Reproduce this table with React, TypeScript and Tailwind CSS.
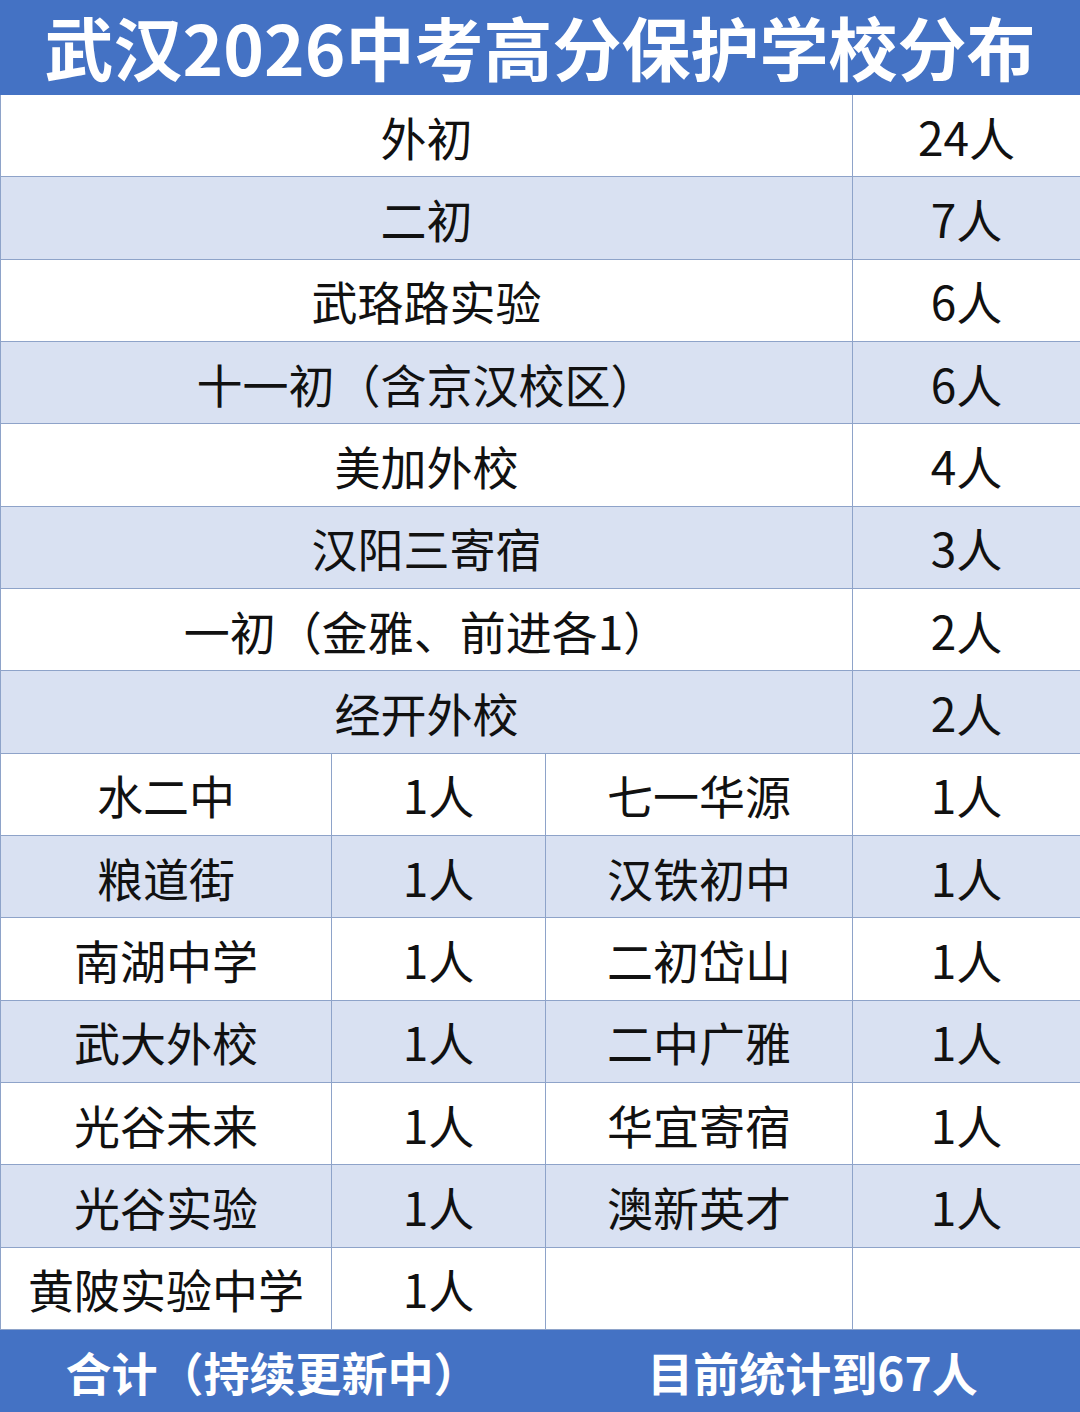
const fullRows: [string, string][] = [
  ['外初', '24人'],
  ['二初', '7人'],
  ['武珞路实验', '6人'],
  ['十一初（含京汉校区）', '6人'],
  ['美加外校', '4人'],
  ['汉阳三寄宿', '3人'],
  ['一初（金雅、前进各1）', '2人'],
  ['经开外校', '2人'],
]

const splitRows: [string, string, string, string][] = [
  ['水二中', '1人', '七一华源', '1人'],
  ['粮道街', '1人', '汉铁初中', '1人'],
  ['南湖中学', '1人', '二初岱山', '1人'],
  ['武大外校', '1人', '二中广雅', '1人'],
  ['光谷未来', '1人', '华宜寄宿', '1人'],
  ['光谷实验', '1人', '澳新英才', '1人'],
  ['黄陂实验中学', '1人', '', ''],
]

const cell = 'flex items-center justify-center border-r border-b border-[#8ea3c9] text-[46px] text-[#111] leading-none'

export default function App() {
  return (
    <div
      className="w-[1080px] h-[1412px] flex flex-col bg-white overflow-hidden"
      style={{ fontFamily: '"Noto Sans CJK SC", "Noto Sans", sans-serif' }}
    >
      <div className="h-[95px] bg-[#4472c4] flex items-center justify-center pb-[3px]">
        <h1 className="text-[69px] font-bold text-white leading-[1.2] whitespace-nowrap">
          武汉2026中考高分保护学校分布
        </h1>
      </div>

      <div className="h-[1235px] grid grid-cols-[331px_214px_307px_228px] grid-rows-[repeat(15,1fr)] border-l border-[#8ea3c9]">
        {fullRows.map(([name, n], i) => {
          const bg = i % 2 === 1 ? 'bg-[#d9e1f2]' : 'bg-white'
          return [
            <div key={'a' + i} className={`${cell} ${bg} col-span-3`}>{name}</div>,
            <div key={'b' + i} className={`${cell} ${bg}`}>{n}</div>,
          ]
        })}
        {splitRows.map((r, i) => {
          const bg = i % 2 === 1 ? 'bg-[#d9e1f2]' : 'bg-white'
          return r.map((t, j) => (
            <div key={'s' + i + '-' + j} className={`${cell} ${bg}`}>{t}</div>
          ))
        })}
      </div>

      <div className="h-[82px] bg-[#4472c4] grid grid-cols-[545px_535px] text-white font-bold text-[46px] leading-none">
        <div className="flex items-center justify-center">合计（持续更新中）</div>
        <div className="flex items-center justify-center">目前统计到67人</div>
      </div>
    </div>
  )
}
